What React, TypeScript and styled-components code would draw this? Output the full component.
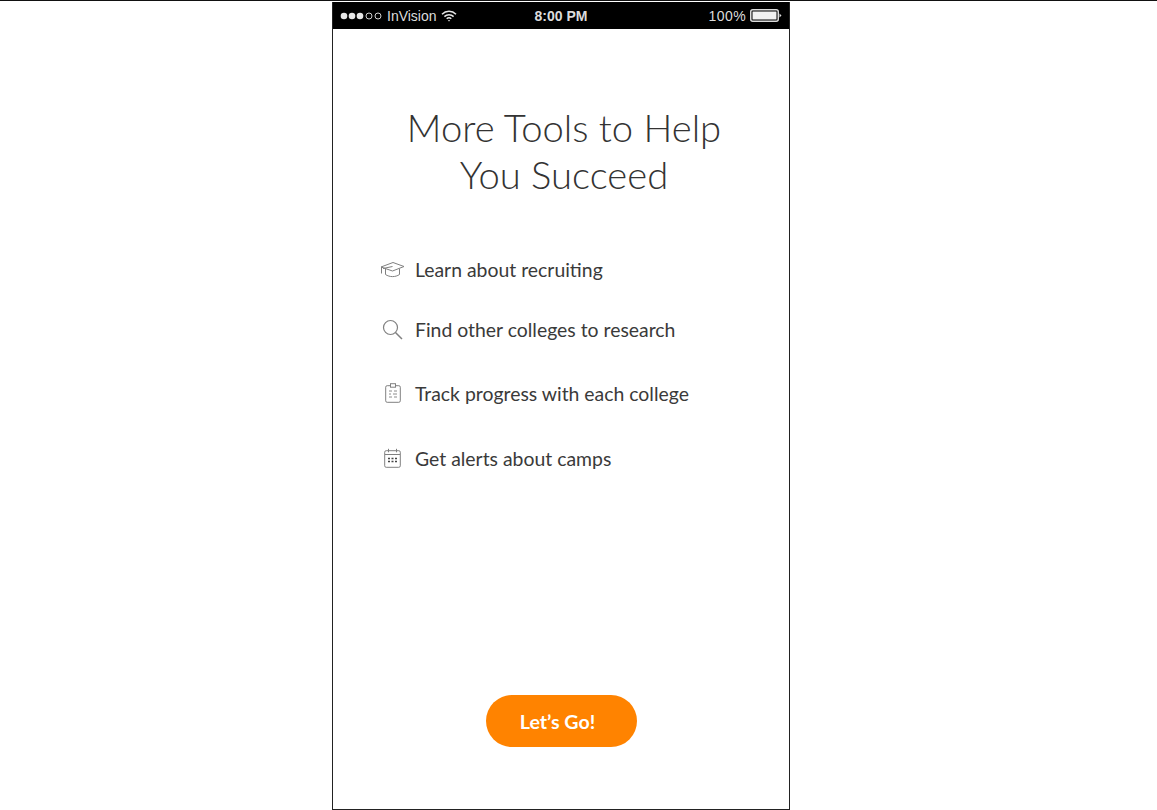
import React from "react";
import styled, { createGlobalStyle } from "styled-components";

const Global = createGlobalStyle`
  html, body { margin: 0; padding: 0; background: #fff; }
  #root { width: 1157px; height: 810px; overflow: hidden; }
`;

const Page = styled.div`
  width: 1157px;
  height: 810px;
  box-sizing: border-box;
  border-top: 1px solid #111;
  padding-top: 1px;
  padding-right: 35px;
  display: flex;
  justify-content: center;
  font-family: Lato, "Liberation Sans", sans-serif;
`;

const Phone = styled.div`
  width: 458px;
  height: 808px;
  box-sizing: border-box;
  border: 1px solid #222;
  border-top: none;
  display: flex;
  flex-direction: column;
  background: #fff;
`;

const StatusBar = styled.div`
  height: 27px;
  background: #000;
  color: #dcdcdc;
  display: flex;
  align-items: center;
  padding: 0 7px;
  font-family: "Liberation Sans", Arial, sans-serif;
  font-size: 14px;
  flex: none;
`;

const StatusSide = styled.div<{ $gap?: number; $end?: boolean }>`
  flex: 1;
  display: flex;
  align-items: center;
  gap: ${(p) => p.$gap ?? 4}px;
  justify-content: ${(p) => (p.$end ? "flex-end" : "flex-start")};
`;

const Clock = styled.span`
  font-weight: 700;
  font-size: 14px;
`;

const Percent = styled.span`
  letter-spacing: 0.4px;
`;

const Title = styled.h1`
  margin: 75px 0 0;
  padding-left: 6px;
  font-family: Lato, sans-serif;
  font-weight: 300;
  font-size: 38.2px;
  line-height: 47px;
  color: #333;
  text-align: center;
`;

const List = styled.ul`
  list-style: none;
  margin: 41px 0 0;
  padding: 0 0 0 47px;
  display: flex;
  flex-direction: column;
`;

const Item = styled.li<{ $h: number }>`
  height: ${(p) => p.$h}px;
  display: flex;
  align-items: center;
  gap: 10px;
  font-size: 19.4px;
  color: #3a3a3a;
`;

const IconSlot = styled.span`
  width: 25px;
  display: flex;
  justify-content: center;
  flex: none;
  color: #808080;
`;

const Spacer = styled.div`
  flex: 1;
`;

const Button = styled.button`
  align-self: center;
  margin: 0 0 62px;
  width: 151px;
  height: 52px;
  border: none;
  border-radius: 26px;
  background: #ff8300;
  color: #fff;
  font-family: Lato, sans-serif;
  font-weight: 700;
  font-size: 19.6px;
  padding: 0 7px 0 0;
`;

const Dots = () => (
  <svg width="43" height="8" viewBox="0 0 43 8">
    {[4, 12, 20].map((x) => <circle key={x} cx={x} cy="4" r="3.3" fill="#e6e6e6" />)}
    {[29, 38].map((x) => <circle key={x} cx={x} cy="4" r="3" fill="none" stroke="#d0d0d0" />)}
  </svg>
);

const Wifi = () => (
  <svg width="16" height="12" viewBox="0 0 16 12" fill="none" stroke="#e6e6e6" strokeWidth="1.5">
    <path d="M1 4.2a10 10 0 0 1 14 0" />
    <path d="M3.4 6.6a6.6 6.6 0 0 1 9.2 0" />
    <path d="M5.7 8.8a3.3 3.3 0 0 1 4.6 0" />
    <path d="M8 11.6 6.9 10.4a1.6 1.6 0 0 1 2.2 0z" fill="#e6e6e6" stroke="none" />
  </svg>
);

const Battery = () => (
  <svg width="32" height="13" viewBox="0 0 32 13">
    <rect x="0.75" y="0.75" width="27.5" height="11.5" rx="2" fill="none" stroke="#dcdcdc" strokeWidth="1.5" />
    <rect x="2.5" y="2.5" width="24" height="8" fill="#f2f2f2" />
    <path d="M29.5 4.5 31.5 6.5 29.5 8.5z" fill="#dcdcdc" />
  </svg>
);

const Cap = () => (
  <svg width="25" height="17" viewBox="0 0 25 17" fill="none" stroke="currentColor" strokeWidth="1">
    <path d="M1 6 13 1.5 24 5.5 12.5 10z" />
    <path d="M5.5 8v5.5c4 2.8 10 2.8 14 0V7.8" />
    <path d="M1.5 6v6.5" />
    <path d="M12.5 5.5 3 7.5" />
  </svg>
);

const Search = () => (
  <svg width="21" height="21" viewBox="0 0 21 21" fill="none" stroke="currentColor" strokeWidth="1.2">
    <circle cx="8.5" cy="8.5" r="7" />
    <path d="M13.5 13.5 20 20" strokeWidth="1.5" />
  </svg>
);

const Clipboard = () => (
  <svg width="16" height="20" viewBox="0 0 16 20" fill="none" stroke="currentColor" strokeWidth="1">
    <rect x="0.7" y="2.7" width="14.6" height="16.6" rx="1.5" />
    <rect x="5.5" y="0.7" width="5" height="3.5" fill="#fff" />
    <path d="M4 8h3M9 8h3M4 11h2M8 11h4M4 14h3M9 14h3" strokeWidth="0.9" />
  </svg>
);

const Calendar = () => (
  <svg width="17" height="20" viewBox="0 0 17 20" fill="none" stroke="currentColor" strokeWidth="1">
    <rect x="0.7" y="2.7" width="15.6" height="16.6" rx="1.5" />
    <path d="M1 6.5h15M4.5 0.8v3.5M12.5 0.8v3.5" />
    <path d="M4 10.5h2M7.5 10.5h2M11 10.5h2M4 13.5h2M7.5 13.5h2M11 13.5h2" stroke="#444" strokeWidth="1.7" />
  </svg>
);

const items = [
  { icon: <Cap />, text: "Learn about recruiting", h: 60 },
  { icon: <Search />, text: "Find other colleges to research", h: 60 },
  { icon: <Clipboard />, text: "Track progress with each college", h: 68 },
  { icon: <Calendar />, text: "Get alerts about camps", h: 62 },
];

export default function App() {
  return (
    <Page>
      <Global />
      <Phone>
        <StatusBar>
          <StatusSide>
            <Dots />
            <span>InVision</span>
            <Wifi />
          </StatusSide>
          <Clock>8:00 PM</Clock>
          <StatusSide $end $gap={4}>
            <Percent>100%</Percent>
            <Battery />
          </StatusSide>
        </StatusBar>
        <Title>
          More Tools to Help
          <br />
          You Succeed
        </Title>
        <List>
          {items.map((it) => (
            <Item key={it.text} $h={it.h}>
              <IconSlot>{it.icon}</IconSlot>
              {it.text}
            </Item>
          ))}
        </List>
        <Spacer />
        <Button>Let’s Go!</Button>
      </Phone>
    </Page>
  );
}
